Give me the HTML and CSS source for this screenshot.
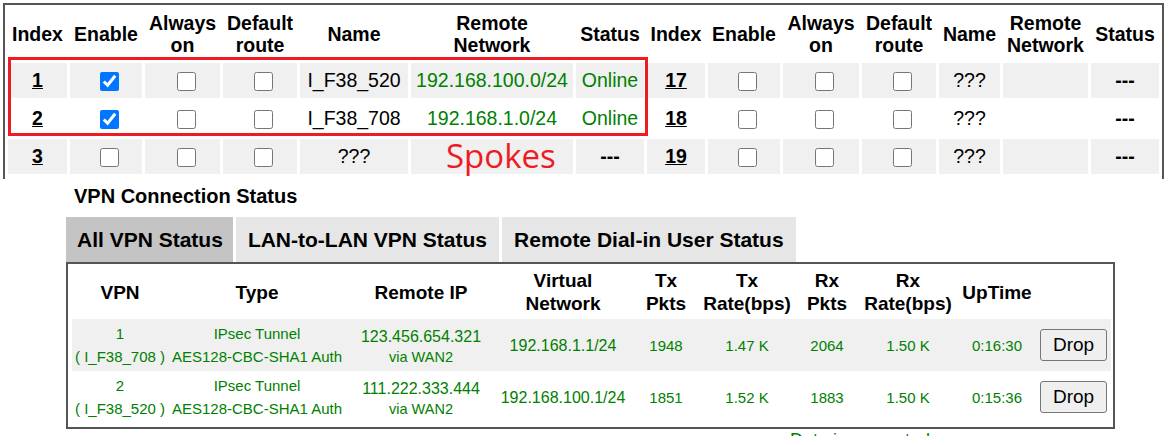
FILE: index.html
```html
<!DOCTYPE html>
<html lang="en">
<head>
    <meta charset="UTF-8">
    <meta name="viewport" content="width=device-width, initial-scale=1.0">
    <title>VPN Profiles</title>

    <link rel="stylesheet" href="styles.css">
</head>
<body>
    <div class="profiles">
        <table class="hub">
            <colgroup>
                <col class="w-idx"><col class="w-en"><col class="w-on"><col class="w-route"><col class="w-name"><col class="w-net"><col class="w-st">
                <col class="w-idx2"><col class="w-en"><col class="w-on2"><col class="w-route"><col class="w-name2"><col class="w-net2"><col class="w-st">
            </colgroup>
            <tr>
                <th>Index</th><th>Enable</th><th>Always<br>on</th><th>Default<br>route</th><th>Name</th><th>Remote<br>Network</th><th>Status</th>
                <th>Index</th><th>Enable</th><th>Always<br>on</th><th>Default<br>route</th><th>Name</th><th>Remote<br>Network</th><th>Status</th>
            </tr>
            <tr class="odd">
                <td><a href="#">1</a></td>
                <td><input type="checkbox" checked></td>
                <td><input type="checkbox"></td>
                <td><input type="checkbox"></td>
                <td>I_F38_520</td>
                <td class="ok">192.168.100.0/24</td>
                <td class="ok">Online</td>
                <td><a href="#">17</a></td>
                <td><input type="checkbox"></td>
                <td><input type="checkbox"></td>
                <td><input type="checkbox"></td>
                <td>???</td>
                <td></td>
                <td class="none">---</td>
            </tr>
            <tr>
                <td><a href="#">2</a></td>
                <td><input type="checkbox" checked></td>
                <td><input type="checkbox"></td>
                <td><input type="checkbox"></td>
                <td>I_F38_708</td>
                <td class="ok">192.168.1.0/24</td>
                <td class="ok">Online</td>
                <td><a href="#">18</a></td>
                <td><input type="checkbox"></td>
                <td><input type="checkbox"></td>
                <td><input type="checkbox"></td>
                <td>???</td>
                <td></td>
                <td class="none">---</td>
            </tr>
            <tr class="odd">
                <td><a href="#">3</a></td>
                <td><input type="checkbox"></td>
                <td><input type="checkbox"></td>
                <td><input type="checkbox"></td>
                <td>???</td>
                <td></td>
                <td class="none">---</td>
                <td><a href="#">19</a></td>
                <td><input type="checkbox"></td>
                <td><input type="checkbox"></td>
                <td><input type="checkbox"></td>
                <td>???</td>
                <td></td>
                <td class="none">---</td>
            </tr>
        </table>
        <!-- red frame round the two spoke profiles -->
        <div class="spokes-box"></div>
        <div class="spokes-label">Spokes</div>
    </div>

    <div class="status">
        <div class="title">VPN Connection Status</div>
        <div class="tabs">
            <div class="tab active">All VPN Status</div>
            <div class="tab">LAN-to-LAN VPN Status</div>
            <div class="tab">Remote Dial-in User Status</div>
        </div>
        <div class="box">
            <table class="conn">
                <colgroup>
                    <col class="c-vpn"><col class="c-type"><col class="c-ip"><col class="c-vnet"><col class="c-pkts">
                    <col class="c-rate"><col class="c-rpkts"><col class="c-rrate"><col class="c-up"><col class="c-drop">
                </colgroup>
                <tr>
                    <th>VPN</th><th>Type</th><th>Remote IP</th><th>Virtual<br>Network</th><th>Tx<br>Pkts</th>
                    <th>Tx<br>Rate(bps)</th><th>Rx<br>Pkts</th><th>Rx<br>Rate(bps)</th><th>UpTime</th><th></th>
                </tr>
                <tr class="odd">
                    <td>1<br>( I_F38_708 )</td>
                    <td>IPsec Tunnel<br>AES128-CBC-SHA1 Auth</td>
                    <td><div class="ip">123.456.654.321</div><div class="via">via WAN2</div></td>
                    <td class="big">192.168.1.1/24</td>
                    <td>1948</td>
                    <td>1.47 K</td>
                    <td>2064</td>
                    <td>1.50 K</td>
                    <td>0:16:30</td>
                    <td class="act"><button type="button">Drop</button></td>
                </tr>
                <tr>
                    <td>2<br>( I_F38_520 )</td>
                    <td>IPsec Tunnel<br>AES128-CBC-SHA1 Auth</td>
                    <td><div class="ip">111.222.333.444</div><div class="via">via WAN2</div></td>
                    <td class="big">192.168.100.1/24</td>
                    <td>1851</td>
                    <td>1.52 K</td>
                    <td>1883</td>
                    <td>1.50 K</td>
                    <td>0:15:36</td>
                    <td class="act"><button type="button">Drop</button></td>
                </tr>
            </table>
        </div>
        <div class="legend">Data is encrypted.</div>
    </div>
</body>
</html>
```

FILE: styles.css
```css
html,body{
    margin: 0;
    padding: 0;
    background-color: #fff;
    color: #000;
    font-family: "Liberation Sans", Arial, sans-serif;
}

/* profile list */
.profiles{
    position: relative;
    width: 1157px;
    height: 174px;
    margin: 3px 0 0 3px;
    border: 2px solid #555;
    border-bottom: none;
    overflow: hidden;
}
.hub{
    width: 100%;
    table-layout: fixed;
    border-spacing: 3px;
    font-size: 19.5px;
}
.w-idx{ width: 59px; }
.w-idx2{ width: 58px; }
.w-en{ width: 72px; }
.w-on{ width: 75px; }
.w-on2{ width: 76px; }
.w-route{ width: 74px; }
.w-name{ width: 108px; }
.w-name2{ width: 61px; }
.w-net{ width: 162px; }
.w-net2{ width: 85px; }
.w-st{ width: 68px; }
.hub th{
    height: 45px;
    padding: 3px 0 4px;
    line-height: 22px;
    font-weight: bold;
    white-space: nowrap;
}
.hub td{
    height: 35px;
    padding: 0;
    text-align: center;
    white-space: nowrap;
}
.hub .odd td{
    background-color: #f0f0f0;
}
.hub a{
    color: #000;
    font-weight: bold;
}
.hub input{
    width: 19px;
    height: 19px;
    margin: 0 0 0 7px;
    vertical-align: middle;
}
.hub .ok{
    color: #008000;
}
.hub .none{
    font-weight: bold;
}
.spokes-box{
    position: absolute;
    left: 3px;
    top: 52px;
    width: 634px;
    height: 73px;
    border: 3px solid #ed1c24;
}
.spokes-label{
    position: absolute;
    left: 441px;
    top: 131px;
    color: #ed1c24;
    font-family: "Open Sans", sans-serif;
    font-size: 33px;
    line-height: 40px;
}

/* connection status */
.status{
    height: 257px;
    padding-left: 66px;
    overflow: hidden;
}
.title{
    margin: 6px 0 9px 8px;
    font-size: 20px;
    line-height: 23px;
    font-weight: bold;
}
.tabs{
    display: flex;
    gap: 3px;
}
.tab{
    height: 45px;
    line-height: 45px;
    padding: 0 12px;
    background-color: #e6e6e6;
    font-size: 21px;
    font-weight: bold;
    white-space: nowrap;
}
.tab.active{
    padding: 0 10px 0 11px;
    background-color: #c4c4c4;
}
.box{
    width: 1039px;
    padding: 4px 2px 4px 4px;
    border: 2px solid #555;
}
.conn{
    width: 100%;
    table-layout: fixed;
    border-collapse: collapse;
}
.c-vpn{ width: 96px; }
.c-type{ width: 178px; }
.c-ip{ width: 150px; }
.c-vnet{ width: 134px; }
.c-pkts{ width: 72px; }
.c-rate{ width: 90px; }
.c-rpkts{ width: 70px; }
.c-rrate{ width: 92px; }
.c-up{ width: 86px; }
.c-drop{ width: 71px; }
.conn th{
    height: 48px;
    padding: 0 0 3px;
    font-size: 19px;
    line-height: 23px;
    font-weight: bold;
    white-space: nowrap;
}
.conn td{
    height: 52px;
    padding: 0;
    color: #008000;
    font-size: 15px;
    line-height: 23px;
    text-align: center;
    white-space: nowrap;
}
.conn .odd td{
    background-color: #f0f0f0;
}
.conn .big{
    font-size: 16px;
}
.conn .ip{
    font-size: 16px;
    line-height: 21px;
    padding-top: 2px;
}
.conn .via{
    font-size: 14.5px;
    line-height: 20px;
}
.conn .act{
    text-align: left;
}
button{
    width: 67px;
    height: 32px;
    padding: 0;
    background-color: #efefef;
    color: #000;
    border: 1px solid #767676;
    border-radius: 3px;
    font-family: "Liberation Sans", Arial, sans-serif;
    font-size: 19px;
    vertical-align: middle;
}
/* only the top of this line is still on screen */
.legend{
    margin: 3px 0 0 724px;
    color: #008000;
    font-size: 18px;
    line-height: 17px;
}
```
